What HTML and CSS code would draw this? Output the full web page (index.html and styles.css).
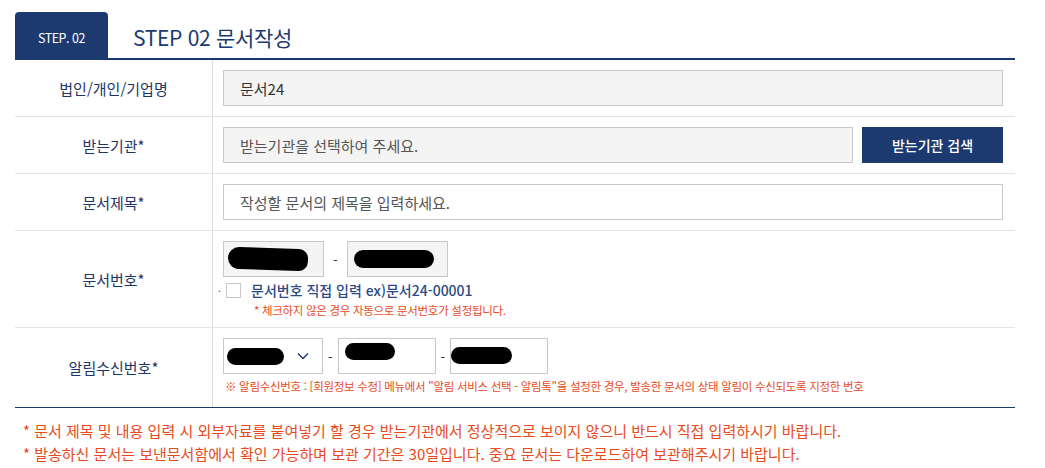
FILE: index.html
```html
<!DOCTYPE html>
<html lang="ko">
  <head>
    <meta charset="UTF-8" />
    <meta name="viewport" content="width=device-width, initial-scale=1.0" />
    <title>문서작성</title>
    <link rel="stylesheet" href="styles.css">
  </head>
  <body>
    <div class="step-head">
      <div class="step-tab">STEP. 02</div>
      <h2 class="step-title">STEP 02 문서작성</h2>
    </div>

    <div class="form-table">
      <div class="row">
        <div class="label">법인/개인/기업명</div>
        <div class="cell">
          <div class="field field-gray field-full">문서24</div>
        </div>
      </div>

      <div class="row">
        <div class="label">받는기관*</div>
        <div class="cell">
          <div class="field field-gray field-grow placeholder">받는기관을 선택하여 주세요.</div>
          <button class="btn-navy">받는기관 검색</button>
        </div>
      </div>

      <div class="row">
        <div class="label">문서제목*</div>
        <div class="cell">
          <div class="field field-full placeholder">작성할 문서의 제목을 입력하세요.</div>
        </div>
      </div>

      <div class="row row-docno">
        <div class="label">문서번호*</div>
        <div class="cell cell-stack">
          <div class="inline-group">
            <div class="field field-gray field-sm"><span class="blot blot-a"></span></div>
            <span class="dash">-</span>
            <div class="field field-gray field-sm"><span class="blot blot-b"></span></div>
          </div>
          <label class="check-line">
            <span class="dot">·</span>
            <span class="checkbox"></span>
            <span class="check-text">문서번호 직접 입력 ex)문서24-00001</span>
          </label>
          <p class="note note-indent">* 체크하지 않은 경우 자동으로 문서번호가 설정됩니다.</p>
        </div>
      </div>

      <div class="row row-phone">
        <div class="label">알림수신번호*</div>
        <div class="cell cell-stack">
          <div class="inline-group">
            <div class="field field-sel">
              <span class="blot blot-c"></span>
              <svg class="chev" width="12" height="8" viewBox="0 0 12 8"><path d="M1 1.5 L6 6.5 L11 1.5" fill="none" stroke="#1c3a70" stroke-width="1.4"/></svg>
            </div>
            <span class="dash dash-sm">-</span>
            <div class="field field-ph"><span class="blot blot-d"></span></div>
            <span class="dash dash-sm">-</span>
            <div class="field field-ph"><span class="blot blot-e"></span></div>
          </div>
          <p class="note note-phone">※ 알림수신번호 : [회원정보 수정] 메뉴에서 "알림 서비스 선택 - 알림톡"을 설정한 경우, 발송한 문서의 상태 알림이 수신되도록 지정한 번호</p>
        </div>
      </div>
    </div>

    <div class="foot-notes">
      <p>* 문서 제목 및 내용 입력 시 외부자료를 붙여넣기 할 경우 받는기관에서 정상적으로 보이지 않으니 반드시 직접 입력하시기 바랍니다.</p>
      <p>* 발송하신 문서는 보낸문서함에서 확인 가능하며 보관 기간은 30일입니다. 중요 문서는 다운로드하여 보관해주시기 바랍니다.</p>
    </div>
  </body>
</html>
```

FILE: styles.css
```css
* {
  margin: 0;
  padding: 0;
  box-sizing: border-box;
}

body {
  background-color: #fff;
  font-family: "Noto Sans CJK KR", "Noto Sans", sans-serif;
  color: #333;
  padding: 13px 30px 0 15px;
  width: 1045px;
}

.step-head {
  display: flex;
  align-items: center;
  height: 47px;
  border-bottom: 2px solid #1c3a70;
}

.step-tab {
  width: 93px;
  height: 47px;
  background-color: #1c3a70;
  border-radius: 4px 4px 0 0;
  color: #fff;
  font-size: 12.5px;
  letter-spacing: -0.5px;
  display: flex;
  align-items: center;
  justify-content: center;
  padding-top: 3px;
}

.step-title {
  margin-left: 25px;
  font-size: 21px;
  font-weight: 400;
  color: #1c3a70;
  letter-spacing: -0.3px;
  padding-top: 2px;
}

.form-table {
  border-bottom: 1px solid #1c3a70;
}

.row {
  display: flex;
  border-bottom: 1px solid #e5e5e5;
  height: 57px;
}

.row-docno {
  height: 97px;
}

.row-phone {
  height: 79px;
  border-bottom: none;
}

.label {
  width: 198px;
  flex-shrink: 0;
  border-right: 1px solid #dcdcdc;
  display: flex;
  align-items: center;
  justify-content: center;
  font-size: 15px;
  color: #1d3566;
}

.cell {
  flex: 1;
  display: flex;
  align-items: center;
  gap: 9px;
  padding: 0 12px 0 10px;
}

.cell-stack {
  flex-direction: column;
  align-items: flex-start;
  justify-content: flex-start;
  gap: 0;
  padding-top: 10px;
}

.field {
  height: 36px;
  border: 1px solid #c8c8c8;
  background-color: #fff;
  font-size: 15px;
  color: #333;
  display: flex;
  align-items: center;
  padding: 0 16px;
}

.field-gray {
  background-color: #f4f4f4;
}

.field-full {
  width: 100%;
}

.field-grow {
  flex: 1;
}

.placeholder {
  color: #555;
}

.btn-navy {
  width: 141px;
  height: 36px;
  border: none;
  background-color: #1c3a70;
  color: #fff;
  font-family: inherit;
  font-size: 14px;
  font-weight: 500;
}

.inline-group {
  display: flex;
  align-items: center;
}

.field-sm {
  width: 101px;
  padding: 0 0 0 4px;
}

.dash {
  padding: 0 9px;
  font-size: 13px;
  color: #333;
}

.dash-sm {
  padding: 0 5px;
}

.blot {
  display: block;
  background-color: #000;
  border-radius: 12px;
}

.blot-a {
  width: 80px;
  height: 22px;
  border-radius: 14px 12px 12px 14px;
  transform: rotate(2deg);
}

.blot-b {
  width: 80px;
  height: 18px;
  margin-left: 2px;
}

.field-sel {
  width: 100px;
  padding: 0 13px 0 3px;
  justify-content: space-between;
}

.blot-c {
  width: 57px;
  height: 17px;
}

.field-ph {
  width: 98px;
  padding: 0 0 0 6px;
  align-items: flex-start;
}

.blot-d {
  width: 50px;
  height: 17px;
  margin-top: 4px;
}

.blot-e {
  width: 61px;
  height: 17px;
  margin-top: 8px;
  margin-left: -6px;
}

.check-line {
  display: flex;
  align-items: center;
  margin-top: 5px;
  height: 16px;
}

.dot {
  font-size: 10px;
  color: #555;
  width: 4px;
  margin-left: -5px;
  margin-right: 4px;
}

.checkbox {
  width: 15px;
  height: 15px;
  border: 1px solid #c8c8c8;
  background-color: #fff;
}

.check-text {
  margin-left: 10px;
  font-size: 14px;
  font-weight: 500;
  color: #2c4a86;
}

.note {
  font-size: 11.5px;
  color: #e84a1c;
  letter-spacing: -0.3px;
}

.note-indent {
  margin-left: 31px;
  margin-top: 4px;
}

.note-phone {
  margin-left: 2px;
  margin-top: 4px;
}

.chev {
  flex-shrink: 0;
}

.foot-notes {
  padding: 11px 0 0 8px;
  font-size: 15px;
  color: #e84a1c;
  line-height: 23px;
}
```
